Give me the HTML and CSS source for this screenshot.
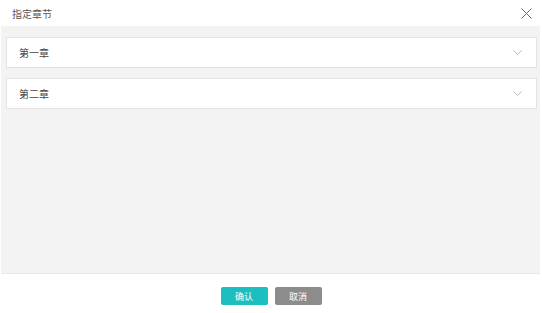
FILE: index.html
```html
<!DOCTYPE html>
<html lang="zh-CN">
<head>
    <meta charset="UTF-8">
    <meta name="viewport" content="width=device-width, initial-scale=1.0">
    <title>指定章节</title>
    <link rel="stylesheet" href="styles.css">
</head>
<body>
    <div class="dialog">
        <div class="dialog-header">
            <span class="dialog-title">指定章节</span>
            <svg class="close-icon" width="11" height="11" viewBox="0 0 11 11">
                <path d="M0.5 0.5 L10.5 10.5 M10.5 0.5 L0.5 10.5" stroke="#666" stroke-width="1" fill="none"/>
            </svg>
        </div>
        <div class="dialog-body">
            <div class="chapter-item">
                <span class="chapter-name">第一章</span>
                <svg class="arrow" width="9" height="5" viewBox="0 0 9 5">
                    <path d="M0.5 0.5 L4.5 4.5 L8.5 0.5" stroke="#b8b8b8" stroke-width="1" fill="none"/>
                </svg>
            </div>
            <div class="chapter-item">
                <span class="chapter-name">第二章</span>
                <svg class="arrow" width="9" height="5" viewBox="0 0 9 5">
                    <path d="M0.5 0.5 L4.5 4.5 L8.5 0.5" stroke="#b8b8b8" stroke-width="1" fill="none"/>
                </svg>
            </div>
        </div>
        <div class="dialog-footer">
            <button class="btn btn-confirm">确认</button>
            <button class="btn btn-cancel">取消</button>
        </div>
    </div>
</body>
</html>
```

FILE: styles.css
```css
body {
    font-family: "Noto Sans CJK SC", "Liberation Sans", sans-serif;
    margin: 0;
    padding: 0;
    background-color: #fff;
}

.dialog {
    width: 542px;
    height: 313px;
    display: flex;
    flex-direction: column;
    background-color: #fff;
}

.dialog-header {
    height: 26px;
    display: flex;
    align-items: center;
    justify-content: space-between;
    padding: 0 10px 0 12px;
}

.dialog-title {
    font-size: 10px;
    color: #555;
}

.close-icon {
    display: block;
    margin-top: 1px;
}

.dialog-body {
    height: 248px;
    margin: 0 2px 0 1px;
    padding: 11px 3px 0 5px;
    background-color: #f3f3f3;
    border-bottom: 1px solid #e8e8e8;
    box-sizing: border-box;
    display: flex;
    flex-direction: column;
    gap: 10px;
}

.chapter-item {
    height: 31px;
    box-sizing: border-box;
    display: flex;
    align-items: center;
    justify-content: space-between;
    padding: 0 14px 0 12px;
    background-color: #fff;
    border: 1px solid #e3e3e3;
}

.chapter-name {
    font-size: 10px;
    color: #444;
}

.arrow {
    display: block;
}

.dialog-footer {
    flex: 1;
    display: flex;
    justify-content: center;
    align-items: flex-start;
    padding-top: 13px;
    gap: 7px;
}

.btn {
    width: 47px;
    height: 18px;
    border: none;
    border-radius: 2px;
    font-family: "Noto Sans CJK SC", sans-serif;
    font-size: 9px;
    color: #fff;
    padding: 0;
    cursor: pointer;
}

.btn-confirm {
    background-color: #1cbfc1;
}

.btn-cancel {
    background-color: #8c8c8c;
}
```
